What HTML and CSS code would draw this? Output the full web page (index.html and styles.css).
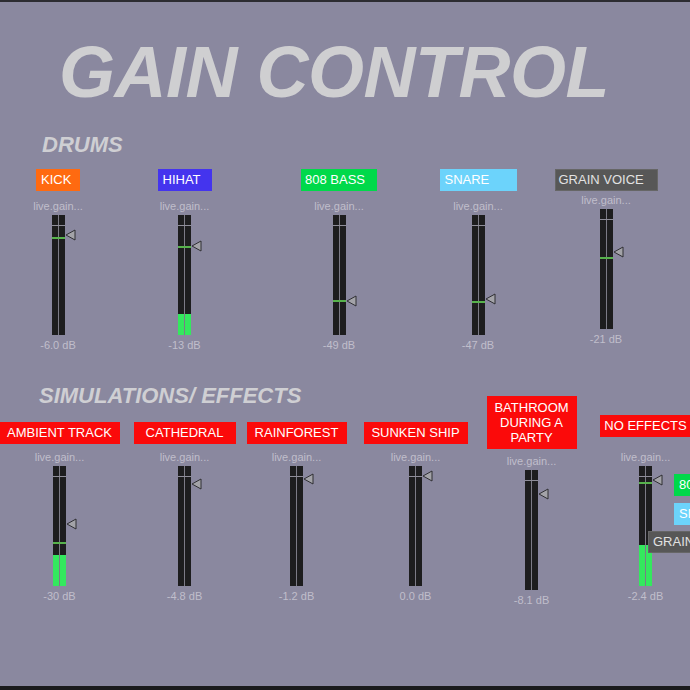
FILE: index.html
```html
<!DOCTYPE html>
<html lang="en">
<head>
  <meta charset="UTF-8" />
  <title>Gain Control</title>
  <link rel="stylesheet" href="styles.css">
</head>
<body>
  <div class="canvas">
    <h1 class="title">GAIN CONTROL</h1>

    <h2 class="group-title group-drums">DRUMS</h2>
    <div class="row drums">
      <div class="strip">
        <div class="tag tag-kick">KICK</div>
        <div class="gain">
          <div class="gain-name">live.gain...</div>
          <div class="meter">
            <div class="ch"></div><div class="ch"></div>
            <div class="peak" style="top:22px"></div>
            <svg class="knob" style="top:14px" width="11" height="12" viewBox="0 0 11 12"><polygon points="1,6 10,1 10,11" /></svg>
          </div>
          <div class="gain-db">-6.0 dB</div>
        </div>
      </div>
      <div class="strip">
        <div class="tag tag-hihat">HIHAT</div>
        <div class="gain">
          <div class="gain-name">live.gain...</div>
          <div class="meter">
            <div class="ch"><div class="fill" style="height:21px"></div></div>
            <div class="ch"><div class="fill" style="height:21px"></div></div>
            <div class="peak" style="top:31px"></div>
            <svg class="knob" style="top:25px" width="11" height="12" viewBox="0 0 11 12"><polygon points="1,6 10,1 10,11" /></svg>
          </div>
          <div class="gain-db">-13 dB</div>
        </div>
      </div>
      <div class="strip">
        <div class="tag tag-bass">808 BASS</div>
        <div class="gain">
          <div class="gain-name">live.gain...</div>
          <div class="meter">
            <div class="ch"></div><div class="ch"></div>
            <div class="peak" style="top:85px"></div>
            <svg class="knob" style="top:80px" width="11" height="12" viewBox="0 0 11 12"><polygon points="1,6 10,1 10,11" /></svg>
          </div>
          <div class="gain-db">-49 dB</div>
        </div>
      </div>
      <div class="strip">
        <div class="tag tag-snare">SNARE</div>
        <div class="gain">
          <div class="gain-name">live.gain...</div>
          <div class="meter">
            <div class="ch"></div><div class="ch"></div>
            <div class="peak" style="top:86px"></div>
            <svg class="knob" style="top:78px" width="11" height="12" viewBox="0 0 11 12"><polygon points="1,6 10,1 10,11" /></svg>
          </div>
          <div class="gain-db">-47 dB</div>
        </div>
      </div>
      <div class="strip strip-tight">
        <div class="tag tag-grain">GRAIN VOICE</div>
        <div class="gain">
          <div class="gain-name">live.gain...</div>
          <div class="meter">
            <div class="ch"></div><div class="ch"></div>
            <div class="peak" style="top:48px"></div>
            <svg class="knob" style="top:37px" width="11" height="12" viewBox="0 0 11 12"><polygon points="1,6 10,1 10,11" /></svg>
          </div>
          <div class="gain-db">-21 dB</div>
        </div>
      </div>
    </div>

    <h2 class="group-title group-effects">SIMULATIONS/ EFFECTS</h2>
    <div class="row effects">
      <div class="strip">
        <div class="tag tag-fx tag-ambient">AMBIENT TRACK</div>
        <div class="gain">
          <div class="gain-name">live.gain...</div>
          <div class="meter">
            <div class="ch"><div class="fill" style="height:31px"></div></div>
            <div class="ch"><div class="fill" style="height:31px"></div></div>
            <div class="peak" style="top:76px"></div>
            <svg class="knob" style="top:52px" width="11" height="12" viewBox="0 0 11 12"><polygon points="1,6 10,1 10,11" /></svg>
          </div>
          <div class="gain-db">-30 dB</div>
        </div>
      </div>
      <div class="strip">
        <div class="tag tag-fx tag-cathedral">CATHEDRAL</div>
        <div class="gain">
          <div class="gain-name">live.gain...</div>
          <div class="meter">
            <div class="ch"></div><div class="ch"></div>
            <svg class="knob" style="top:12px" width="11" height="12" viewBox="0 0 11 12"><polygon points="1,6 10,1 10,11" /></svg>
          </div>
          <div class="gain-db">-4.8 dB</div>
        </div>
      </div>
      <div class="strip">
        <div class="tag tag-fx tag-rainforest">RAINFOREST</div>
        <div class="gain">
          <div class="gain-name">live.gain...</div>
          <div class="meter">
            <div class="ch"></div><div class="ch"></div>
            <svg class="knob" style="top:7px" width="11" height="12" viewBox="0 0 11 12"><polygon points="1,6 10,1 10,11" /></svg>
          </div>
          <div class="gain-db">-1.2 dB</div>
        </div>
      </div>
      <div class="strip">
        <div class="tag tag-fx tag-ship">SUNKEN SHIP</div>
        <div class="gain">
          <div class="gain-name">live.gain...</div>
          <div class="meter">
            <div class="ch"></div><div class="ch"></div>
            <svg class="knob" style="top:4px" width="11" height="12" viewBox="0 0 11 12"><polygon points="1,6 10,1 10,11" /></svg>
          </div>
          <div class="gain-db">0.0 dB</div>
        </div>
      </div>
      <div class="strip strip-bath">
        <div class="tag tag-fx tag-bath">BATHROOM DURING A PARTY</div>
        <div class="gain">
          <div class="gain-name">live.gain...</div>
          <div class="meter">
            <div class="ch"></div><div class="ch"></div>
            <svg class="knob" style="top:18px" width="11" height="12" viewBox="0 0 11 12"><polygon points="1,6 10,1 10,11" /></svg>
          </div>
          <div class="gain-db">-8.1 dB</div>
        </div>
      </div>
      <div class="strip strip-none">
        <div class="tag tag-fx tag-none">NO EFFECTS</div>
        <div class="gain">
          <div class="gain-name">live.gain...</div>
          <div class="meter">
            <div class="ch"><div class="fill" style="height:41px"></div></div>
            <div class="ch"><div class="fill" style="height:41px"></div></div>
            <div class="peak" style="top:16px"></div>
            <svg class="knob" style="top:8px" width="11" height="12" viewBox="0 0 11 12"><polygon points="1,6 10,1 10,11" /></svg>
          </div>
          <div class="gain-db">-2.4 dB</div>
        </div>
      </div>
    </div>

    <!-- stray copies of the drum labels left lying over the last meter -->
    <div class="tag tag-bass stray stray-bass">808 BASS</div>
    <div class="tag tag-snare stray stray-snare">SNARE</div>
    <div class="tag tag-grain stray stray-grain">GRAIN VOICE</div>
  </div>
</body>
</html>
```

FILE: styles.css
```css
html, body {
  margin: 0;
  padding: 0;
  overflow: hidden;
  background: #1b1b1d;
}

body {
  font-family: "Liberation Sans", Arial, sans-serif;
}

.canvas {
  position: relative;
  height: 684px;
  background: #8a889f;
  border-top: 2px solid #2c2c31;
  border-bottom: 4px solid #1b1b1d;
  overflow: hidden;
}

.title {
  margin: 34px 0 0;
  padding-left: 59px;
  font-size: 72px;
  line-height: 72px;
  font-weight: bold;
  font-style: italic;
  letter-spacing: -0.5px;
  color: #cfcfd1;
}

.group-title {
  margin: 0;
  font-size: 22px;
  line-height: 22px;
  font-weight: bold;
  font-style: italic;
  color: #cfcfd3;
}

.group-drums {
  margin-top: 26px;
  padding-left: 42px;
}

.group-effects {
  margin-top: 34px;
  padding-left: 39px;
}

/* rows of channel strips */
.row {
  display: grid;
  align-items: start;
}

.drums {
  margin-top: 13px;
  grid-template-columns: 116px 137px 172px 106px 150px;
}

.effects {
  margin-top: -11px;
  grid-template-columns: 119px 131px 93px 145px 87px 141px;
}

.strip {
  display: flex;
  flex-direction: column;
  align-items: center;
}

.drums .gain {
  margin-top: 9px;
}

.drums .strip-tight .gain {
  margin-top: 3px;
}

.effects .strip {
  margin-top: 26px;
}

.effects .gain {
  margin-top: 7px;
}

.effects .strip-bath {
  margin-top: 0;
}

.effects .strip-bath .gain {
  margin-top: 6px;
}

.effects .strip-none {
  margin-top: 19px;
}

.effects .strip-none .gain {
  margin-top: 14px;
}

/* coloured comment labels */
.tag {
  flex-shrink: 0;
  box-sizing: border-box;
  height: 22px;
  line-height: 22px;
  padding-left: 5px;
  font-size: 13px;
  color: #ffffff;
  white-space: nowrap;
}

.tag-kick { width: 44px; background: #ff6a10; }
.tag-hihat { width: 54px; background: #4434ee; }
.tag-bass { width: 76px; background: #00d94a; padding-left: 4px; }
.tag-snare { width: 77px; background: #6cd3fb; }
.tag-grain {
  width: 103px;
  background: #575757;
  border: 1px solid #666;
  line-height: 20px;
  padding-left: 3px;
  color: #e2e2e2;
}

.tag-fx {
  padding: 0;
  text-align: center;
  background: #fb0a0a;
}

.tag-ambient { width: 120px; }
.tag-cathedral { width: 102px; }
.tag-rainforest { width: 100px; }
.tag-ship { width: 104px; }
.tag-none { width: 92px; }

.tag-bath {
  width: 90px;
  height: 53px;
  padding: 4px 0;
  line-height: 15px;
  white-space: normal;
}

/* live.gain~ meter */
.gain {
  display: flex;
  flex-direction: column;
  align-items: center;
}

.gain-name,
.gain-db {
  font-size: 11px;
  line-height: 12px;
  color: #c0becb;
  white-space: nowrap;
}

.gain-db {
  margin-top: 4px;
}

.meter {
  position: relative;
  display: flex;
  gap: 1px;
  width: 13px;
  height: 120px;
  margin-top: 3px;
  background: #7c7b86;
}

.meter::before {
  content: "";
  position: absolute;
  left: 0;
  right: 0;
  top: 10px;
  height: 1px;
  background: #8f8e99;
  z-index: 1;
}

.ch {
  position: relative;
  flex: 1;
  background: #1d1d1e;
}

.fill {
  position: absolute;
  left: 0;
  right: 0;
  bottom: 0;
  background: #34e85e;
}

.peak {
  position: absolute;
  left: 0;
  right: 0;
  height: 2px;
  background: #57b24c;
  z-index: 2;
}

.knob {
  position: absolute;
  left: 13px;
  z-index: 3;
}

.knob polygon {
  fill: #a3a3a8;
  stroke: #2f2f33;
  stroke-width: 1;
}

/* stray labels sitting over the last strip */
.stray {
  position: absolute;
  z-index: 5;
}

.stray-bass { left: 674px; top: 472px; padding-left: 5px; }
.stray-snare { left: 674px; top: 501px; }
.stray-grain { left: 648px; top: 529px; padding-left: 4px; }
```
